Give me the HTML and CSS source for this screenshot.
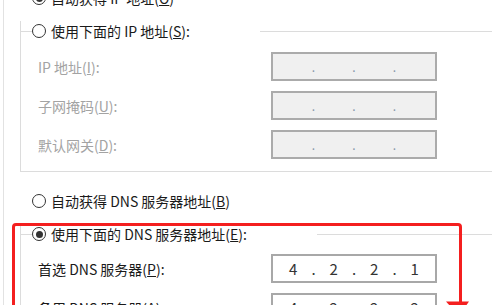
FILE: index.html
```html
<!DOCTYPE html>
<html lang="zh-CN">
<head>
<meta charset="utf-8">
<title>IPv4 属性</title>
<link rel="stylesheet" href="styles.css">
</head>
<body>
<div class="outer">
  <div class="opt top">
    <span class="radio checked"></span><span class="lbl">自动获得 IP 地址(<u>O</u>)</span>
  </div>

  <div class="group g1">
    <div class="legend">
      <span class="seg"></span><span class="radio"></span><span class="lbl">使用下面的 IP 地址(<u>S</u>):</span><span class="rule"></span>
    </div>
    <div class="fields">
      <div class="field disabled">
        <span class="flabel">IP 地址(<u>I</u>):</span>
        <div class="ip"><span class="oct"></span><span class="dot">.</span><span class="oct"></span><span class="dot">.</span><span class="oct"></span><span class="dot">.</span><span class="oct"></span></div>
      </div>
      <div class="field disabled">
        <span class="flabel">子网掩码(<u>U</u>):</span>
        <div class="ip"><span class="oct"></span><span class="dot">.</span><span class="oct"></span><span class="dot">.</span><span class="oct"></span><span class="dot">.</span><span class="oct"></span></div>
      </div>
      <div class="field disabled">
        <span class="flabel">默认网关(<u>D</u>):</span>
        <div class="ip"><span class="oct"></span><span class="dot">.</span><span class="oct"></span><span class="dot">.</span><span class="oct"></span><span class="dot">.</span><span class="oct"></span></div>
      </div>
    </div>
  </div>

  <div class="opt dns-auto">
    <span class="radio"></span><span class="lbl">自动获得 DNS 服务器地址(<u>B</u>)</span>
  </div>

  <div class="group g2">
    <div class="legend">
      <span class="seg"></span><span class="radio checked"></span><span class="lbl">使用下面的 DNS 服务器地址(<u>E</u>):</span><span class="rule"></span>
    </div>
    <div class="fields">
      <div class="field">
        <span class="flabel">首选 DNS 服务器(<u>P</u>):</span>
        <div class="ip on"><span class="oct">4</span><span class="dot">.</span><span class="oct">2</span><span class="dot">.</span><span class="oct">2</span><span class="dot">.</span><span class="oct">1</span></div>
      </div>
      <div class="field">
        <span class="flabel">备用 DNS 服务器(<u>A</u>):</span>
        <div class="ip on"><span class="oct">4</span><span class="dot">.</span><span class="oct">2</span><span class="dot">.</span><span class="oct">2</span><span class="dot">.</span><span class="oct">2</span></div>
      </div>
    </div>
  </div>
</div>

<svg class="annot" width="492" height="305" viewBox="0 0 492 305" aria-hidden="true">
  <path d="M13.5 320 V227 Q13.5 224.5 16 224.5 H458 Q460.5 224.5 460.5 227 V303" fill="none" stroke="#f41f1f" stroke-width="3"/>
  <polygon points="446,301.5 469,301.5 459,316" fill="#f41f1f"/>
</svg>
</body>
</html>
```
FILE: styles.css
```css
html, body {
  margin: 0;
  padding: 0;
  background: #ffffff;
}

body {
  width: 492px;
  height: 305px;
  overflow: hidden;
  position: relative;
  font-family: "Noto Sans CJK SC", "Noto Sans", sans-serif;
  font-size: 14px;
  color: #1a1a1a;
}

.outer {
  display: flow-root;
  margin-left: 3px;
  border-left: 1px solid #e2e2e2;
  height: 320px;
}

.opt {
  display: flex;
  align-items: center;
  height: 20px;
  margin-left: 28px;
}

.top {
  margin-top: -12px;
}

.dns-auto {
  margin-top: 19px;
}

.radio {
  flex: none;
  width: 14px;
  height: 14px;
  box-sizing: border-box;
  border: 1.3px solid #333333;
  border-radius: 50%;
  display: flex;
  align-items: center;
  justify-content: center;
  background: #ffffff;
}

.radio.checked::after {
  content: "";
  width: 7px;
  height: 7px;
  border-radius: 50%;
  background: #333333;
}

.lbl {
  margin-left: 5px;
  white-space: nowrap;
  line-height: 20px;
}

.group {
  margin-left: 16px;
  border-left: 1px solid #dcdcdc;
  border-bottom: 1px solid #dcdcdc;
}

.g1 {
  margin-top: 23px;
  padding-bottom: 12px;
}

.g2 {
  margin-top: 23px;
  padding-bottom: 12px;
}

.legend {
  display: flex;
  align-items: center;
  height: 20px;
  margin-top: -10px;
  margin-left: -1px;
}

.seg {
  flex: none;
  width: 12px;
  height: 1px;
  background: #dcdcdc;
}

.rule {
  flex: 1;
  height: 1px;
  margin-left: 70px;
  background: #dcdcdc;
}

.fields {
  display: flex;
  flex-direction: column;
  gap: 10px;
  margin-top: 11px;
  padding-left: 17px;
}

.g2 .fields {
  margin-top: 10px;
}

.field {
  display: flex;
  align-items: center;
  height: 29px;
}

.flabel {
  flex: none;
  width: 233px;
  white-space: nowrap;
}

.disabled .flabel {
  color: #a3a3a3;
}

.ip {
  flex: none;
  width: 166px;
  height: 29px;
  box-sizing: border-box;
  border: 2px solid #ababab;
  background: #f0f0f0;
  display: flex;
  align-items: center;
  color: #333333;
}

.ip.on {
  background: #ffffff;
  border-color: #a8a8a8;
  font-size: 15px;
}

.oct {
  flex: 1;
  text-align: center;
  line-height: 20px;
}

.dot {
  width: 0;
  display: flex;
  justify-content: center;
  line-height: 20px;
}

.disabled .dot {
  color: #8797aa;
  font-size: 12px;
}

.annot {
  position: absolute;
  left: 0;
  top: 0;
  pointer-events: none;
}
```
